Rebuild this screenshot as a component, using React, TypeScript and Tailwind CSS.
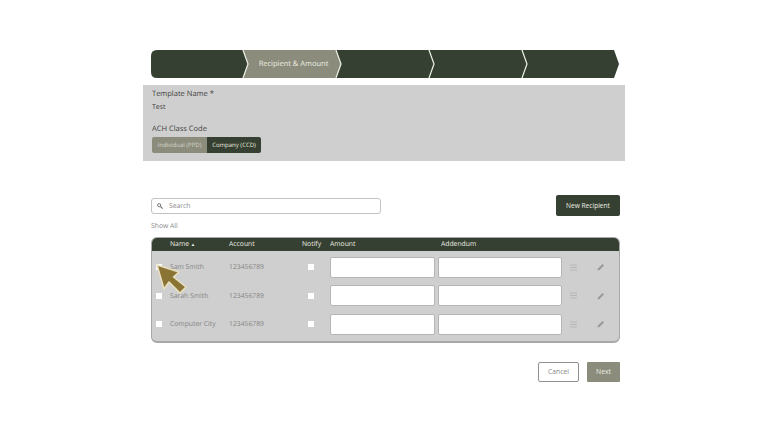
import * as React from 'react';

const DARK = 'bg-[#364032]';

function Cursor() {
  return (
    <svg className="absolute left-[155px] top-[263px]" width="33" height="32" viewBox="0 0 33 32">
      <path
        d="M2 2 L24 9 L18.5 14 L31 24 L25 30 L14 19 L9 26 Z"
        fill="#8a7434"
        stroke="#e9dfbf"
        strokeWidth="1.6"
        strokeLinejoin="round"
      />
    </svg>
  );
}

function Stepper() {
  return (
    <div className="relative mx-[151px] flex h-[28px] w-[468px]">
      <svg className="absolute inset-0" width="468" height="28" viewBox="0 0 468 28">
        <path d="M6 0 H463 L468 14 L463 28 H6 Q0 28 0 22 V6 Q0 0 6 0 Z" fill="#364032" />
        <path d="M92 0 H185 L190 14 L185 28 H92 L97 14 Z" fill="#8b8c7b" />
        {[92, 185, 278, 371].map((x) => (
          <path key={x} d={`M${x} 0 L${x + 5} 14 L${x} 28`} fill="none" stroke="#f1f2ea" strokeWidth="1.2" />
        ))}
      </svg>
      <div className="relative ml-[97px] flex h-full w-[93px] items-center justify-center pt-[1px] pr-[2px] text-[7.5px] text-[#eceee2]">
        Recipient &amp; Amount
      </div>
    </div>
  );
}

function Row({ name }: { name: string }) {
  return (
    <div className="flex h-[28.5px] items-center text-[6.8px] text-[#858585]">
      <input type="checkbox" className="ml-[5px] h-[6px] w-[6px] appearance-none bg-white" />
      <span className="ml-[8px] w-[59px]">{name}</span>
      <span className="w-[79px]">123456789</span>
      <input type="checkbox" className="h-[6px] w-[6px] appearance-none bg-white" />
      <div className="ml-[16px] h-[21px] w-[105px] rounded-[2px] border border-[#b5b5b5] bg-white" />
      <div className="ml-[3px] h-[21px] w-[124px] rounded-[2px] border border-[#b5b5b5] bg-white" />
      <svg className="ml-[8px]" width="7" height="7" viewBox="0 0 7 7">
        <path d="M0 1H7M0 3.5H7M0 6H7" stroke="#b0b0b0" strokeWidth="0.8" />
      </svg>
      <svg className="ml-[20px]" width="8" height="8" viewBox="0 0 8 8">
        <path d="M0.5 7.5 L1 5.5 L5.5 1 L7 2.5 L2.5 7 Z" fill="#9a9a9a" />
      </svg>
    </div>
  );
}

export default function App() {
  return (
    <div className="relative h-[432px] w-[768px] overflow-hidden bg-white pt-[50px] font-['Open_Sans',sans-serif] antialiased [text-rendering:geometricPrecision]">
      <Stepper />

      <section className="mx-[143px] mt-[7px] h-[76px] w-[482px] bg-[#cfcfcf] px-[9px] pt-[3px]">
        <div className="text-[7.5px] leading-[12px] text-[#404040]">Template Name *</div>
        <div className="mt-[2px] text-[7px] leading-[12px] text-[#404040]">Test</div>
        <div className="mt-[9px] text-[7.5px] leading-[12px] text-[#404040]">ACH Class Code</div>
        <div className="mt-[2px] flex h-[16px] w-[109px] overflow-hidden rounded-[2px] text-[6px]">
          <div className="flex w-[55px] items-center justify-center bg-[#8b8c7b] text-[#d8d8cc]">Individual (PPD)</div>
          <div className={`flex flex-1 items-center justify-center ${DARK} text-[#e8e8de]`}>Company (CCD)</div>
        </div>
      </section>

      <div className="mx-[151px] mt-[34px] flex h-[21px] w-[469px] items-start justify-between">
        <div className="mt-[3px] flex h-[16px] w-[230px] items-center rounded-[3px] border border-[#c4c4c4] bg-white pl-[5px] text-[6.8px] text-[#8a8a8a]">
          <svg width="6" height="6" viewBox="0 0 6 6">
            <circle cx="2.2" cy="2.2" r="1.6" fill="none" stroke="#666" strokeWidth="0.9" />
            <path d="M3.4 3.4 L5.6 5.6" stroke="#666" strokeWidth="1.1" />
          </svg>
          <span className="ml-[6px]">Search</span>
        </div>
        <button className={`h-[21px] w-[64px] rounded-[2px] ${DARK} text-[6.6px] text-[#eceee2]`}>New Recipient</button>
      </div>

      <div className="mx-[151px] mt-[4px] text-[6.8px] leading-[11px] text-[#8a8a8a]">Show All</div>

      <div className="mx-[151px] mt-[6px] h-[106px] w-[469px] overflow-hidden rounded-[6px] border border-b-2 border-[#a8a8a8] bg-[#cfcfcf]">
        <div className={`flex h-[13px] items-center ${DARK} text-[6.8px] text-[#eceee2]`}>
          <span className="ml-[18px] w-[59px]">
            Name <span className="text-[4.5px]">▲</span>
          </span>
          <span className="w-[73px]">Account</span>
          <span className="w-[28px]">Notify</span>
          <span className="w-[111px]">Amount</span>
          <span>Addendum</span>
        </div>
        <div className="pt-[2px] -ml-px">
          <Row name="Sam Smith" />
          <Row name="Sarah Smith" />
          <Row name="Computer City" />
        </div>
      </div>

      <div className="mx-[151px] mt-[19px] flex w-[469px] justify-end gap-[8px] text-[6.8px]">
        <button className="h-[20px] w-[41px] rounded-[2px] border border-[#8f8f8f] bg-white text-[#8a8a8a]">Cancel</button>
        <button className="h-[20px] w-[33px] rounded-[1px] bg-[#8b8c7b] text-[#eceee2]">Next</button>
      </div>

      <Cursor />
    </div>
  );
}
